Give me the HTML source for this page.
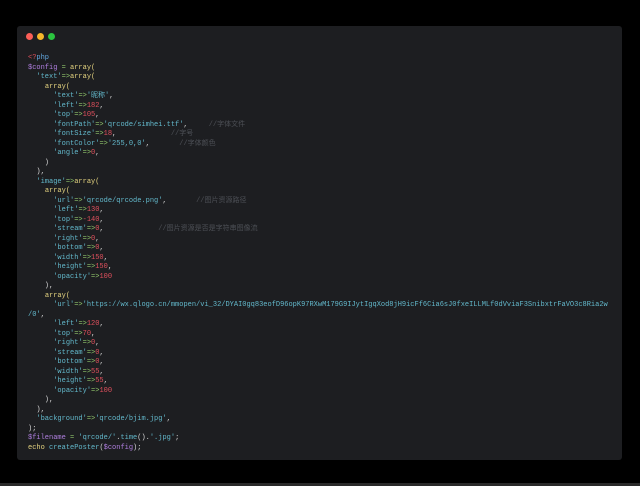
<!DOCTYPE html>
<html><head><meta charset="utf-8"><style>
html,body{margin:0;padding:0;background:#000;width:640px;height:486px;overflow:hidden}
.panel{position:absolute;left:17px;top:26px;width:605px;height:434px;background:#1d1e21;border-radius:3px}
.d{position:absolute;top:33px;width:7px;height:7px;border-radius:50%}
pre{position:absolute;left:28px;top:54px;margin:0;font-family:"Liberation Mono","Noto Sans CJK SC",monospace;font-size:7px;line-height:9.5px;color:#d6d6d6;white-space:pre}
.k{color:#e3d27f}.s{color:#63b9cc}.o{color:#8fc46a}.n{color:#e0505d}.v{color:#b07fe0}.c{color:#4d5056}.p{color:#e0505d}.b{color:#62a8e0}
.bot{position:absolute;left:0;top:483px;width:640px;height:3px;background:#2a2a2a}
</style></head><body>
<div class="panel"></div>
<div class="d" style="left:26px;background:#fb5e57"></div>
<div class="d" style="left:37px;background:#f5b62a"></div>
<div class="d" style="left:48px;background:#2bc43f"></div>
<pre><span class="p">&lt;?</span><span class="b">php</span>
<span class="v">$config</span> <span class="o">=</span> <span class="k">array(</span>
  <span class="s">'text'</span><span class="o">=&gt;</span><span class="k">array(</span>
    <span class="k">array(</span>
      <span class="s">'text'</span><span class="o">=&gt;</span><span class="s">'昵称'</span>,
      <span class="s">'left'</span><span class="o">=&gt;</span><span class="n">182</span>,
      <span class="s">'top'</span><span class="o">=&gt;</span><span class="n">105</span>,
      <span class="s">'fontPath'</span><span class="o">=&gt;</span><span class="s">'qrcode/simhei.ttf'</span>,     <span class="c">//字体文件</span>
      <span class="s">'fontSize'</span><span class="o">=&gt;</span><span class="n">18</span>,             <span class="c">//字号</span>
      <span class="s">'fontColor'</span><span class="o">=&gt;</span><span class="s">'255,0,0'</span>,       <span class="c">//字体颜色</span>
      <span class="s">'angle'</span><span class="o">=&gt;</span><span class="n">0</span>,
    )
  ),
  <span class="s">'image'</span><span class="o">=&gt;</span><span class="k">array(</span>
    <span class="k">array(</span>
      <span class="s">'url'</span><span class="o">=&gt;</span><span class="s">'qrcode/qrcode.png'</span>,       <span class="c">//图片资源路径</span>
      <span class="s">'left'</span><span class="o">=&gt;</span><span class="n">130</span>,
      <span class="s">'top'</span><span class="o">=&gt;</span><span class="n">-140</span>,
      <span class="s">'stream'</span><span class="o">=&gt;</span><span class="n">0</span>,             <span class="c">//图片资源是否是字符串图像流</span>
      <span class="s">'right'</span><span class="o">=&gt;</span><span class="n">0</span>,
      <span class="s">'bottom'</span><span class="o">=&gt;</span><span class="n">0</span>,
      <span class="s">'width'</span><span class="o">=&gt;</span><span class="n">150</span>,
      <span class="s">'height'</span><span class="o">=&gt;</span><span class="n">150</span>,
      <span class="s">'opacity'</span><span class="o">=&gt;</span><span class="n">100</span>
    ),
    <span class="k">array(</span>
      <span class="s">'url'</span><span class="o">=&gt;</span><span class="s">'https://wx.qlogo.cn/mmopen/vi_32/DYAI0gq83eofD96opK97RXwM179G9IJytIgqXod8jH9icFf6Cia6sJ0fxeILLMLf0dVviaF3SnibxtrFaVO3c8Ria2w</span>
<span class="s">/0'</span>,
      <span class="s">'left'</span><span class="o">=&gt;</span><span class="n">120</span>,
      <span class="s">'top'</span><span class="o">=&gt;</span><span class="n">70</span>,
      <span class="s">'right'</span><span class="o">=&gt;</span><span class="n">0</span>,
      <span class="s">'stream'</span><span class="o">=&gt;</span><span class="n">0</span>,
      <span class="s">'bottom'</span><span class="o">=&gt;</span><span class="n">0</span>,
      <span class="s">'width'</span><span class="o">=&gt;</span><span class="n">55</span>,
      <span class="s">'height'</span><span class="o">=&gt;</span><span class="n">55</span>,
      <span class="s">'opacity'</span><span class="o">=&gt;</span><span class="n">100</span>
    ),
  ),
  <span class="s">'background'</span><span class="o">=&gt;</span><span class="s">'qrcode/bjim.jpg'</span>,
);
<span class="v">$filename</span> <span class="o">=</span> <span class="s">'qrcode/'</span>.<span class="s">time</span>().<span class="s">'.jpg'</span>;
<span class="k">echo</span> <span class="s">createPoster</span>(<span class="v">$config</span>);</pre>
<div class="bot"></div>
</body></html>
